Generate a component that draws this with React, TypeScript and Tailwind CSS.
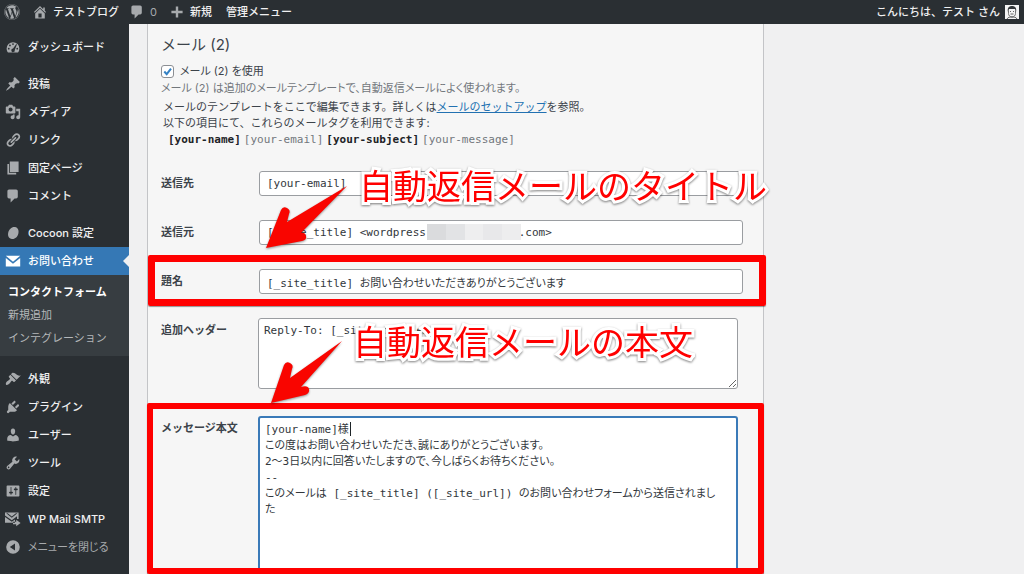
import type { ReactNode } from "react";
import { FaWordpress } from "react-icons/fa";
import clsx from "clsx";

type IconName = keyof typeof ICONS;

const ICONS = {
  home: "M16 8.5l1.53 1.53-1.06 1.06L10 4.6l-6.47 6.49-1.06-1.06L10 2.5l4 4v-2h2v4zm-6-2.46l6 5.99V18H4v-5.97zM12 17v-5H8v5h4z",
  comment:
    "M5 2h9c1.1 0 2 .9 2 2v7c0 1.1-.9 2-2 2h-2l-5 5v-5H5c-1.1 0-2-.9-2-2V4c0-1.1.9-2 2-2z",
  plus: "M17 8.5v3h-5.5V17h-3v-5.5H3v-3h5.5V3h3v5.5z",
  dashboard:
    "M3.76 17h12.48A7.96 7.96 0 0 0 18 12a8 8 0 1 0-16 0c0 1.89.66 3.63 1.76 5zM10 5.2a1.1 1.1 0 1 1 0 2.2 1.1 1.1 0 0 1 0-2.2zM6.2 7a1.1 1.1 0 1 1 0 2.2 1.1 1.1 0 0 1 0-2.2zm7.9-.6l.8.6-2.7 6.6a2.2 2.2 0 1 1-2.1-1.6zM4.7 11a1.1 1.1 0 1 1 0 2.2 1.1 1.1 0 0 1 0-2.2zm10.6 0a1.1 1.1 0 1 1 0 2.2 1.1 1.1 0 0 1 0-2.2z",
  post: "M10.44 3.02l1.82-1.82 6.36 6.35-1.83 1.82c-1.05-.68-2.48-.57-3.41.36l-.75.75c-.92.93-1.04 2.35-.35 3.41l-1.83 1.82-2.41-2.41-2.8 2.79c-.42.42-3.38 2.71-3.8 2.29s1.86-3.39 2.28-3.81l2.79-2.79L4.1 9.36l1.83-1.82c1.05.69 2.48.57 3.4-.36l.75-.75c.93-.92 1.05-2.35.36-3.41z",
  media:
    "M13 11V4c0-.55-.45-1-1-1h-1.67L9 1H5L3.67 3H2c-.55 0-1 .45-1 1v7c0 .55.45 1 1 1h10c.55 0 1-.45 1-1zM7 4.5c1.38 0 2.5 1.12 2.5 2.5S8.38 9.5 7 9.5 4.5 8.38 4.5 7 5.62 4.5 7 4.5zM14 6h5v10.5c0 1.38-1.12 2.5-2.5 2.5S14 17.88 14 16.5s1.12-2.5 2.5-2.5c.17 0 .34.02.5.05V9h-3V6zm-4 8.05V13h2v3.5c0 1.38-1.12 2.5-2.5 2.5S7 17.88 7 16.5 8.12 14 9.5 14c.17 0 .34.02.5.05z",
  link: "M17.74 2.76c1.68 1.69 1.68 4.41 0 6.1l-1.53 1.52c-1.12 1.12-2.7 1.47-4.14 1.09l2.62-2.61.76-.77.76-.76c.84-.84.84-2.2 0-3.04-.84-.85-2.2-.85-3.04 0l-.77.76-3.38 3.38c-.37-1.44-.02-3.02 1.1-4.14l1.52-1.53c1.69-1.68 4.42-1.68 6.1 0zM8.59 13.43l5.34-5.34c.42-.42.42-1.1 0-1.52-.44-.43-1.13-.39-1.53 0l-5.33 5.34c-.42.42-.42 1.1 0 1.52.44.43 1.13.39 1.52 0zm-.76 2.29l4.14-4.15c.38 1.44.03 3.02-1.09 4.14l-1.52 1.53c-1.69 1.68-4.41 1.68-6.1 0-1.68-1.68-1.68-4.42 0-6.1l1.53-1.52c1.12-1.12 2.7-1.47 4.14-1.1l-4.14 4.15c-.85.84-.85 2.2 0 3.05.84.84 2.2.84 3.04 0z",
  page: "M6 15V2h11v13H6zm-1 1h9v2H3V5h2v11z",
  cocoon: "M12.5 2.5c3.6.6 5.2 4 4.2 8.200-1 4.300-4.300 7.300-8 6.800-3.800-.5-5.600-3.900-4.700-7.900C5 5.200 8.500 1.900 12.500 2.500z",
  mail: "M1 3.500h18L10 11zM1 6.200l9 7.300 9-7.300V17H1z",
  appearance:
    "M14.48 11.06L7.41 3.99l1.5-1.5c.5-.56 2.3-.47 3.51.32 1.21.8 1.43 1.28 2.91 2.1 1.18.64 2.45 1.26 4.45.85zm-.71.71L6.7 4.7 4.93 6.47c-.39.39-.39 1.02 0 1.41l1.06 1.06c.39.39.39 1.03 0 1.42-.6.6-1.43 1.11-2.21 1.69-.35.26-.7.53-1.01.84C1.43 14.23.4 16.08 1.4 17.07c.99 1 2.84-.03 4.18-1.36.31-.31.58-.66.85-1.02.57-.78 1.08-1.61 1.69-2.21.39-.39 1.02-.39 1.41 0l1.06 1.06c.39.39 1.02.39 1.41 0z",
  plugin:
    "M13.11 4.36L9.87 7.6 8 5.73l3.24-3.24c.35-.34 1.05-.2 1.56.32.52.51.66 1.21.31 1.55zm-8 1.77l.91-1.12 9.01 9.01-1.19.84c-.71.71-2.63 1.16-3.82 1.16H6.14L4.9 17.26c-.59.59-1.54.59-2.12 0-.59-.58-.59-1.53 0-2.12l1.24-1.24v-3.88c0-1.13.4-3.19 1.09-3.89zm7.26 3.97l3.24-3.24c.34-.35 1.04-.21 1.55.31.52.51.66 1.21.31 1.55l-3.24 3.25z",
  user: "M10 9.25c-2.27 0-2.73-3.44-2.73-3.44C7 4.02 7.82 2 9.97 2c2.16 0 2.98 2.02 2.71 3.81 0 0-.41 3.44-2.68 3.44zm0 2.57L12.72 10c2.39 0 4.52 2.33 4.52 4.53v2.49s-3.65 1.13-7.24 1.13c-3.65 0-7.24-1.13-7.24-1.13v-2.49c0-2.25 1.94-4.48 4.47-4.48z",
  tools:
    "M16.68 9.77c-1.34 1.34-3.3 1.67-4.95.99l-5.41 6.52c-.99.99-2.59.99-3.58 0s-.99-2.59 0-3.57l6.52-5.42c-.68-1.65-.35-3.61.99-4.95 1.28-1.28 3.12-1.62 4.72-1.06l-2.89 2.89 2.82 2.82 2.86-2.87c.53 1.58.18 3.39-1.08 4.65zM3.81 16.21c.4.39 1.04.39 1.43 0 .4-.4.4-1.04 0-1.43-.39-.4-1.03-.4-1.43 0-.39.39-.39 1.03 0 1.43z",
  settings:
    "M18 16V4c0-.55-.45-1-1-1H3c-.55 0-1 .45-1 1v12c0 .55.45 1 1 1h14c.55 0 1-.45 1-1zM8 11h1c.55 0 1 .45 1 1s-.45 1-1 1H8v1.5c0 .28-.22.5-.5.5s-.5-.22-.5-.5V13H6c-.55 0-1-.45-1-1s.45-1 1-1h1V5.5c0-.28.22-.5.5-.5s.5.22.5.5V11zm5-2h-1c-.55 0-1-.45-1-1s.45-1 1-1h1V5.5c0-.28.22-.5.5-.5s.5.22.5.5V7h1c.55 0 1 .45 1 1s-.45 1-1 1h-1v5.5c0 .28-.22.5-.5.5s-.5-.22-.5-.5V9z",
  smtp: "M0 2h17v8h-2V6.500l-6.500 5L0 5.500zM1.500 2.800l7 5.700 7-5.700h-1.800L8.500 6.800 3.300 2.800zM0 7.500l8.500 6 4-2.800v4H0zM14 11l5.500 4-5.500 4v-2.500h-4v-3h4z",
  collapse: "M10 1.500a8.500 8.500 0 1 0 0 17 8.500 8.500 0 0 0 0-17zM12.500 5.500v9L6 10z",
};

function Icon({ name, className }: { name: IconName; className?: string }) {
  return (
    <svg
      viewBox="0 0 20 20"
      fill="currentColor"
      fillRule="evenodd"
      aria-hidden="true"
      className={clsx("size-4 shrink-0", className)}
    >
      <path d={ICONS[name]} />
    </svg>
  );
}

const MENU: { icon: IconName; label: string }[][] = [
  [{ icon: "dashboard", label: "ダッシュボード" }],
  [
    { icon: "post", label: "投稿" },
    { icon: "media", label: "メディア" },
    { icon: "link", label: "リンク" },
    { icon: "page", label: "固定ページ" },
    { icon: "comment", label: "コメント" },
  ],
  [
    { icon: "cocoon", label: "Cocoon 設定" },
    { icon: "mail", label: "お問い合わせ" },
  ],
  [
    { icon: "appearance", label: "外観" },
    { icon: "plugin", label: "プラグイン" },
    { icon: "user", label: "ユーザー" },
    { icon: "tools", label: "ツール" },
    { icon: "settings", label: "設定" },
    { icon: "smtp", label: "WP Mail SMTP" },
  ],
];

const ACTIVE = "お問い合わせ";
const SUBMENU = ["コンタクトフォーム", "新規追加", "インテグレーション"];

const MESSAGE = `[your-name]様
この度はお問い合わせいただき、誠にありがとうございます。
2〜3日以内に回答いたしますので、今しばらくお待ちください。
--
このメールは [_site_title] ([_site_url]) のお問い合わせフォームから送信されました`;

const MONO =
  "font-['DejaVu_Sans_Mono','Noto_Sans_CJK_JP',monospace] text-[11px] [font-feature-settings:'palt']";

function AdminBar() {
  return (
    <header className="flex h-6 shrink-0 items-center bg-[#2a2f33] px-1 text-[11px] font-medium text-[#f0f0f1]">
      <a href="#" aria-label="WordPress">
        <FaWordpress className="size-4 text-[#a7aaad]" />
      </a>
      <a href="#" className="ml-3 flex items-center gap-[5px]">
        <Icon name="home" className="text-[#a7aaad]" />
        テストブログ
      </a>
      <a href="#" className="ml-[10px] flex items-center gap-[5px] font-normal text-[#a7aaad]">
        <Icon name="comment" />0
      </a>
      <a href="#" className="ml-[12px] flex items-center gap-[5px]">
        <Icon name="plus" className="text-[#a7aaad]" />
        新規
      </a>
      <a href="#" className="ml-[14px]">
        管理メニュー
      </a>
      <a href="#" className="ml-auto flex items-center gap-[5px]">
        こんにちは、テスト さん
        <svg viewBox="0 0 14 14" className="mr-px size-[14px]" aria-hidden="true">
          <rect width="14" height="14" fill="#f4f4f4" />
          <path d="M3 7C2 3 4 1 7 1s5 2 4 6l-1-3H4z" fill="#33373a" />
          <path d="M3.500 5.500v3C3.500 10.500 5 12 7 12s3.500-1.500 3.500-3.500v-3" fill="none" stroke="#555" strokeWidth=".8" />
          <path d="M5 6.500h1M8 6.500h1M5.500 9h3M2 14c1-2 3-2 5-2s4 0 5 2" fill="none" stroke="#444" strokeWidth=".8" />
        </svg>
      </a>
    </header>
  );
}

function Sidebar() {
  return (
    <nav className="w-[129px] shrink-0 bg-[#2a2f33] text-[11px] font-medium text-[#f0f0f1]">
      {MENU.map((group, i) => (
        <ul key={i} className="pt-[9px]">
          {group.map((item) => {
            const active = item.label === ACTIVE;
            return (
              <li key={item.label}>
                <a
                  href="#"
                  className={clsx(
                    "relative flex h-7 items-center gap-[7px] pl-[5px]",
                    active && "bg-[#3578b5] text-white",
                  )}
                >
                  <Icon
                    name={item.icon}
                    className={active ? "text-white" : "text-[#a7aaad]"}
                  />
                  {item.label}
                  {active && (
                    <span className="absolute right-0 border-y-[6px] border-r-[6px] border-y-transparent border-r-[#f0f0f1]" />
                  )}
                </a>
                {active && (
                  <ul className="bg-[#373d41] py-[6px] font-normal text-[#b5b8ba]">
                    {SUBMENU.map((label, n) => (
                      <li key={label}>
                        <a
                          href="#"
                          className={clsx(
                            "block pl-2 leading-[23px]",
                            n === 0 && "font-bold text-white",
                          )}
                        >
                          {label}
                        </a>
                      </li>
                    ))}
                  </ul>
                )}
              </li>
            );
          })}
        </ul>
      ))}
      <button
        type="button"
        className="flex h-7 items-center gap-[7px] pl-[5px] font-normal text-[#a7aaad] [font-feature-settings:'palt']"
      >
        <Icon name="collapse" />
        メニューを閉じる
      </button>
    </nav>
  );
}

function Row({
  id,
  label,
  children,
}: {
  id: string;
  label: string;
  children: ReactNode;
}) {
  return (
    <div className="relative flex items-start pt-3 pb-3 pl-[13px]">
      <label htmlFor={id} className="w-[98px] shrink-0 font-bold leading-[25px]">
        {label}
      </label>
      {children}
    </div>
  );
}

function TextInput({ id, value }: { id: string; value: string }) {
  return (
    <input
      id={id}
      type="text"
      defaultValue={value}
      className={clsx(
        MONO,
        "mr-5 h-[25px] min-w-0 flex-1 rounded-[3px] border border-[#9a9da1] bg-white px-[7px] text-[#32373c]",
      )}
    />
  );
}

function Highlight({ className }: { className: string }) {
  return (
    <div
      className={clsx(
        "pointer-events-none absolute z-10 rounded-[2px] border-[#ff0000] shadow-[0_1px_1px_rgba(0,0,0,0.4)]",
        className,
      )}
    />
  );
}

function Callout({ className, children }: { className: string; children: ReactNode }) {
  return (
    <p
      className={clsx(
        "pointer-events-none absolute z-20 text-[34px] leading-10 font-normal whitespace-nowrap text-[#ff0000] drop-shadow-[0_1px_1px_rgba(0,0,0,0.5)] [-webkit-text-stroke:6px_white] [paint-order:stroke] [stroke-linejoin:round]",
        className,
      )}
    >
      {children}
    </p>
  );
}

function Arrow({ d, className }: { d: string; className: string }) {
  return (
    <svg
      viewBox="0 0 90 74"
      aria-hidden="true"
      className={clsx(
        "pointer-events-none absolute z-20 h-[74px] w-[90px] drop-shadow-[0_1px_1px_rgba(0,0,0,0.4)]",
        className,
      )}
    >
      <path d={d} fill="#f90500" />
    </svg>
  );
}

function MailPanel() {
  return (
    <section className="mr-[260px] ml-[18px] flex-1 border-x border-[#c3c4c7] bg-[#f6f6f6] text-[11px] text-[#3c434a]">
      <h2 className="pt-[11px] pl-[13px] text-[15px] leading-5 font-normal">
        メール (2)
      </h2>
      <div className="mt-2 pl-[13px] leading-4 [font-feature-settings:'palt']">
        <label className="flex items-center gap-[6px]">
          <span className="relative flex size-[13px]">
            <input
              type="checkbox"
              defaultChecked
              className="size-[13px] appearance-none rounded-[3px] border border-[#8c8f94] bg-white"
            />
            <svg viewBox="0 0 13 13" className="pointer-events-none absolute inset-0" aria-hidden="true">
              <path d="M3.300 6.500l2.400 2.700 4.300-5.600" fill="none" stroke="#3582c4" strokeWidth="2" />
            </svg>
          </span>
          メール (2) を使用
        </label>
        <p className="mt-px text-[#72777c]">
          メール (2) は追加のメールテンプレートで、自動返信メールによく使われます。
        </p>
      </div>
      <div className="mt-[3px] pl-[15px] leading-4">
        <p>
          メールのテンプレートをここで編集できます。詳しくは
          <a href="#" className="text-[#2271b1] underline">
            メールのセットアップ
          </a>
          を参照。
        </p>
        <p>以下の項目にて、これらのメールタグを利用できます:</p>
      </div>
      <p className="mt-px mb-[11px] flex gap-[3px] pl-5 font-['DejaVu_Sans_Mono',monospace] leading-4">
        <strong className="text-[#1d2327]">[your-name]</strong>
        <span className="text-[#72777c]">[your-email]</span>
        <strong className="text-[#1d2327]">[your-subject]</strong>
        <span className="text-[#72777c]">[your-message]</span>
      </p>

      <form>
        <Row id="to" label="送信先">
          <TextInput id="to" value="[your-email]" />
          <Callout className="top-2 left-[211px]">自動返信メールのタイトル</Callout>
          <Arrow
            className="top-[22px] left-[115px]"
            d="M84 5L38 52q4-1 5 3t-4 5L3 67 18 29q2-4 6-2t2 6l-2 8z"
          />
        </Row>
        <Row id="from" label="送信元">
          <TextInput
            id="from"
            value={"[_site_title] <wordpress" + "\u00a0".repeat(14) + ".com>"}
          />
          {/* masked domain */}
          <div className="absolute top-4 left-[279px] flex h-4 w-[94px]">
            <span className="flex-1 bg-[#dadbdd]" />
            <span className="flex-1 bg-[#e2e3e5]" />
            <span className="flex-1 bg-[#eeeeef]" />
            <span className="flex-1 bg-[#e8e8ea]" />
            <span className="flex-1 bg-[#ededee]" />
          </div>
        </Row>
        <Row id="subject" label="題名">
          <TextInput
            id="subject"
            value="[_site_title] お問い合わせいただきありがとうございます"
          />
          <Highlight className="-top-[2px] -right-[3px] bottom-0 left-0 border-[7px]" />
        </Row>
        <Row id="headers" label="追加ヘッダー">
          <textarea
            id="headers"
            defaultValue="Reply-To: [_site_admin_email]"
            className={clsx(
              MONO,
              "mr-[25px] mb-[3px] -ml-px h-[71px] min-w-0 flex-1 rounded-[3px] border border-[#9a9da1] bg-white px-[5px] py-1 leading-4 text-[#32373c]",
            )}
          />
          <Callout className="top-[17px] left-[205px]">自動返信メールの本文</Callout>
          <Arrow
            className="top-[31px] left-[120px]"
            d="M74 4L33 50q7-2 8 2t-4 6L3 66 16 28q2-4 6-2t2 6l-2 9z"
          />
        </Row>
        <Row id="body" label="メッセージ本文">
          <div className="relative mr-[25px] -ml-px flex min-w-0 flex-1">
            <textarea
              id="body"
              defaultValue={MESSAGE}
              className={clsx(
                MONO,
                "h-[220px] w-full rounded-[3px] border-2 border-[#3a7ab8] bg-white py-1 pr-4 pl-[5px] leading-4 text-[#32373c] outline-none",
              )}
            />
            <span className="absolute top-[6px] left-[92px] h-[14px] w-px bg-[#1d2327]" />
          </div>
          <Highlight className="-top-px -right-px -left-px h-[171px] border-[6px]" />
        </Row>
      </form>
    </section>
  );
}

export default function App() {
  return (
    <div className="flex h-screen flex-col overflow-hidden bg-white pb-[2px] font-['Inter','Noto_Sans_CJK_JP',sans-serif]">
      <AdminBar />
      <div className="flex min-h-0 flex-1 overflow-hidden bg-[#f0f0f1]">
        <Sidebar />
        <main className="flex min-w-0 flex-1 self-start">
          <MailPanel />
        </main>
      </div>
    </div>
  );
}
